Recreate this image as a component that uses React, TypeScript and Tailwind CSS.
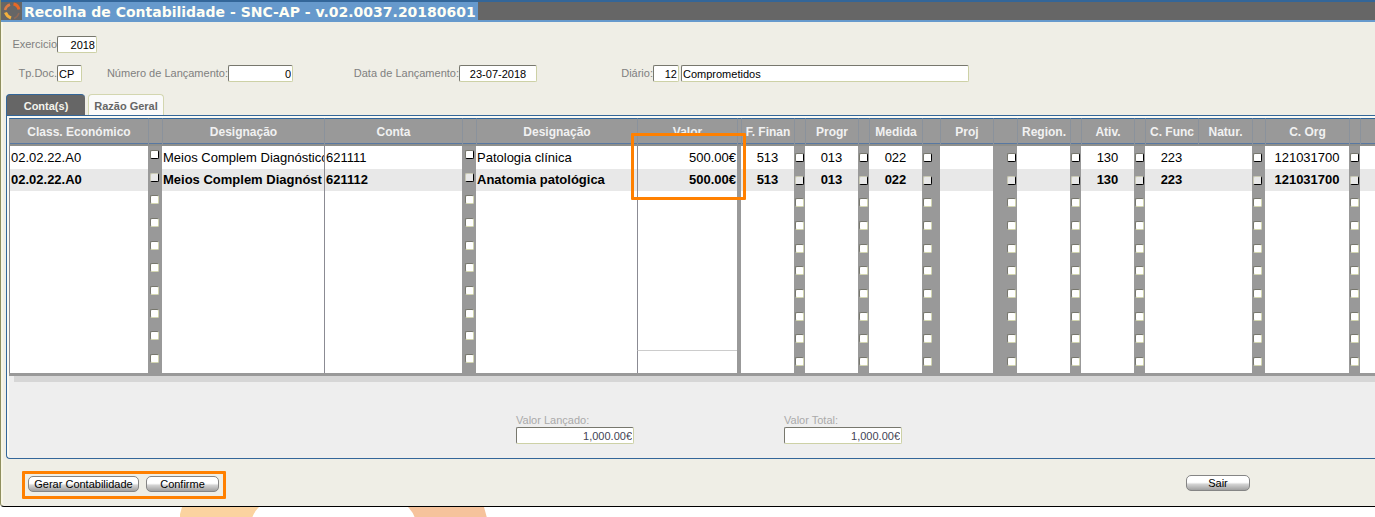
import React from "react";

type Column = {
  id: string;
  title?: string;
  width: string;
  kind: "text" | "high" | "low" | "gap";
  align?: string;
  line?: boolean;
};

const columns: Column[] = [
  { id: "classe", title: "Class. Económico", width: "w-[139px]", kind: "text", align: "text-left", line: true },
  { id: "b1", width: "w-[14px]", kind: "high", align: "pl-[2px]" },
  { id: "design1", title: "Designação", width: "w-[162px]", kind: "text", align: "text-left" },
  { id: "conta", title: "Conta", width: "w-[138px]", kind: "text", align: "text-left", line: true },
  { id: "b2", width: "w-[14px]", kind: "high", align: "pl-[3px]" },
  { id: "design2", title: "Designação", width: "w-[161px]", kind: "text", align: "text-left" },
  { id: "valor", title: "Valor", width: "w-[100px]", kind: "text", align: "text-right", line: true },
  { id: "g1", width: "w-[4px]", kind: "gap" },
  { id: "ffinan", title: "F. Finan", width: "w-[53px]", kind: "text", align: "text-center" },
  { id: "b3", width: "w-[11px]", kind: "low", align: "pl-px" },
  { id: "progr", title: "Progr", width: "w-[53px]", kind: "text", align: "text-center" },
  { id: "b4", width: "w-[11px]", kind: "low", align: "pl-px" },
  { id: "medida", title: "Medida", width: "w-[53px]", kind: "text", align: "text-center" },
  { id: "b5", width: "w-[18px]", kind: "low", align: "pl-px" },
  { id: "proj", title: "Proj", width: "w-[53px]", kind: "text", align: "text-center" },
  { id: "b6", width: "w-[24px]", kind: "low", align: "pl-[14px]" },
  { id: "region", title: "Region.", width: "w-[53px]", kind: "text", align: "text-center" },
  { id: "b7", width: "w-[11px]", kind: "low", align: "pl-px" },
  { id: "ativ", title: "Ativ.", width: "w-[53px]", kind: "text", align: "text-center" },
  { id: "b8", width: "w-[11px]", kind: "low", align: "pl-px" },
  { id: "cfunc", title: "C. Func", width: "w-[53px]", kind: "text", align: "text-center" },
  { id: "natur", title: "Natur.", width: "w-[54px]", kind: "text", align: "text-center" },
  { id: "b9", width: "w-[13px]", kind: "low", align: "pl-px" },
  { id: "corg", title: "C. Org", width: "w-[84px]", kind: "text", align: "text-center" },
  { id: "b10", width: "w-[11px]", kind: "low", align: "pl-px" },
  { id: "rest", width: "w-auto", kind: "text" },
];

const entries: Record<string, string>[] = [
  {
    classe: "02.02.22.A0",
    design1: "Meios Complem Diagnóstico",
    conta: "621111",
    design2: "Patologia clínica",
    valor: "500.00€",
    ffinan: "513",
    progr: "013",
    medida: "022",
    ativ: "130",
    cfunc: "223",
    corg: "121031700",
  },
  {
    classe: "02.02.22.A0",
    design1: "Meios Complem Diagnóst",
    conta: "621112",
    design2: "Anatomia patológica",
    valor: "500.00€",
    ffinan: "513",
    progr: "013",
    medida: "022",
    ativ: "130",
    cfunc: "223",
    corg: "121031700",
  },
];

const rowHeights = [
  "h-[23px]", "h-[22px]", "h-[23px]", "h-[23px]", "h-[22px]",
  "h-[23px]", "h-[23px]", "h-[22px]", "h-[23px]", "h-[23px]",
];

const fieldStyle =
  "h-[17px] rounded-[2px] border border-t-[#77776d] border-l-[#77776d] border-r-[#cdd1a6] border-b-[#cdd1a6] bg-white px-[3px] text-[11px] leading-[15px]";

function Field(props: {
  id: string;
  label: string;
  value: string;
  labelWidth: string;
  className: string;
}) {
  return (
    <div className="flex items-center">
      <label htmlFor={props.id} className={`${props.labelWidth} text-right text-[11px] whitespace-nowrap text-[#808080]`}>
        {props.label}
      </label>
      <input id={props.id} defaultValue={props.value} className={`${fieldStyle} ${props.className}`} />
    </div>
  );
}

function Marker({ row, name }: { row: number; name: string }) {
  const look =
    row === 0
      ? "border-t-[#77776d] border-l-[#77776d] border-r-black border-b-black bg-white"
      : row === 1
        ? "border-t-[#c9c9b4] border-l-[#c9c9b4] border-r-black border-b-black bg-[#e8e8e8]"
        : "border-t-[#77776d] border-l-[#77776d] border-r-[#d3d6b0] border-b-[#d3d6b0] bg-white";
  return (
    <input
      type="checkbox"
      aria-label={`${name} ${row + 1}`}
      className={`block size-[9px] appearance-none rounded-[2px] border ${look}`}
    />
  );
}

function Cell({ column, row }: { column: Column; row: number }) {
  const line = column.line ? "border-l border-l-[#8b8b93]" : "";
  if (column.kind === "gap") return <td className="bg-[#999] p-0" />;
  if (column.kind !== "text") {
    const top = column.kind === "high" ? "pt-[4px]" : "pt-[7px]";
    return (
      <td className={`bg-[#999] p-0 align-top ${top} ${column.align}`}>
        <Marker row={row} name={column.id} />
      </td>
    );
  }
  const fill = row === 1 ? "bg-[#e8e8e8]" : "bg-white";
  const last = row === 9 && column.id === "valor" ? "border-t border-t-[#ccc]" : "";
  return (
    <td className={`overflow-hidden px-px py-0 text-[13px] leading-[22px] whitespace-nowrap text-black ${fill} ${line} ${last} ${column.align ?? ""}`}>
      {entries[row]?.[column.id] ?? ""}
    </td>
  );
}

function Total({ id, label }: { id: string; label: string }) {
  return (
    <div className="flex w-[118px] flex-col">
      <label htmlFor={id} className="h-[14px] text-[11px] leading-[14px] text-[#aaa]">{label}</label>
      <input id={id} defaultValue="1,000.00€" className={`${fieldStyle} w-full pr-px text-right text-[#444455]`} />
    </div>
  );
}

const buttonStyle =
  "h-4 rounded-[5px] border border-[#858585] bg-linear-to-b from-white from-45% via-[#d2d2d2] via-60% to-[#a0a0a0] text-[11px] leading-[14px] text-black";

export default function App() {
  return (
    <div className="overflow-hidden bg-white font-['Liberation_Sans',Arial,sans-serif]">
      <main className="rounded-bl-[4px] border-b border-l border-b-black border-l-[#8f8f5f] bg-[#efeee6] shadow-[inset_2px_0_#f8f6e6]">
        <header className="flex h-[22px] border-t-2 border-b-2 border-t-[#336699] border-b-[#6699cc] bg-[#666]">
          <svg className="w-[21px] shrink-0" viewBox="0 0 21 18" fill="none">
            <path d="M9 2.500Q5 4 4 8" stroke="#dc7b45" strokeWidth="2.500" />
            <path d="M12.500 2Q17 3 18 7.500" stroke="#e86826" strokeWidth="3" />
            <path d="M4.500 10.500Q6 14.500 10 16" stroke="#f3b13d" strokeWidth="3" />
            <path d="M18 11Q17 14.500 13 16.500" stroke="#8f6a58" strokeWidth="1.500" />
          </svg>
          <h1 className="bg-[#6699cc] px-[2px] font-['DejaVu_Sans',Verdana,sans-serif] text-[14px] leading-[20px] font-bold whitespace-nowrap text-[#fffff4]">
            Recolha de Contabilidade - SNC-AP - v.02.0037.20180601
          </h1>
        </header>

        <form className="flex flex-col gap-3 pt-[14px] pl-[10px]">
          <Field id="exercicio" label="Exercicio" value="2018" labelWidth="w-[46px]" className="w-10 pr-px text-right" />
          <div className="flex">
            <Field id="tpdoc" label="Tp.Doc." value="CP" labelWidth="w-[46px]" className="w-[25px] pl-px" />
            <div className="ml-6">
              <Field id="numero" label="Número de Lançamento:" value="0" labelWidth="w-[122px]" className="w-[65px] pr-px text-right" />
            </div>
            <div className="ml-[58px]">
              <Field id="data" label="Data de Lançamento:" value="23-07-2018" labelWidth="w-[108px]" className="w-[78px] text-center" />
            </div>
            <div className="ml-[84px]">
              <Field id="diario" label="Diário:" value="12" labelWidth="w-8" className="w-[26px] pr-px text-right" />
            </div>
            <input aria-label="Nome do diário" defaultValue="Comprometidos" className={`${fieldStyle} ml-[2px] w-72 pl-px`} />
          </div>
        </form>

        <div role="tablist" className="mt-3 flex gap-[3px] pl-[5px]">
          <button role="tab" aria-selected="true" className="h-[21px] w-[79px] rounded-t-[4px] border-t border-l border-[#336699] bg-[#666] pt-[2px] text-[11px] font-bold text-[#f4f4ec]">
            Conta(s)
          </button>
          <button role="tab" aria-selected="false" className="h-[21px] w-[76px] rounded-t-[4px] border border-b-0 border-[#d3d6b0] bg-[#fafafa] pt-[2px] text-[11px] font-bold whitespace-nowrap text-[#666]">
            Razão Geral
          </button>
        </div>

        <section className="ml-[5px] rounded-bl-[4px] border-t border-b border-l border-[#336699] bg-[#eee] pt-[2px] pl-[2px] shadow-[inset_2px_2px_#fafaf4]">
          <table className="w-full table-fixed border-separate border-spacing-0 border-b-[3px] border-b-[#999]">
            <colgroup>
              {columns.map((c) => (
                <col key={c.id} className={c.width} />
              ))}
            </colgroup>
            <thead>
              <tr className="h-[28px] bg-[#999]">
                {columns.map((c) => (
                  <th
                    key={c.id}
                    className="relative border-t border-b-2 border-l border-t-[#336699] border-b-[#8e8f8c] border-l-[#8a929c] p-0 text-[12px] leading-[22px] font-bold whitespace-nowrap text-[#f1f1f1] shadow-[inset_0_-1px_#5878a2]"
                  >
                    {c.title}
                    {c.id === "valor" && (
                      <span className="pointer-events-none absolute top-[14px] -left-[7px] z-10 h-[67px] w-[115px] rounded-[1px] border-3 border-[#ff8000]" />
                    )}
                  </th>
                ))}
              </tr>
            </thead>
            <tbody>
              {rowHeights.map((height, row) => (
                <tr key={row} className={`${height} ${row === 1 ? "font-bold" : ""}`}>
                  {columns.map((c) => (
                    <Cell key={c.id} column={c} row={row} />
                  ))}
                </tr>
              ))}
            </tbody>
          </table>
          <div className="ml-[5px] h-[6px] bg-[#d6d6d6]" />
          <div className="flex gap-[150px] pt-[31px] pb-[14px] pl-[507px]">
            <Total id="lancado" label="Valor Lançado:" />
            <Total id="total" label="Valor Total:" />
          </div>
        </section>

        <footer className="flex items-center pt-3 pb-[7px] pl-[21px]">
          <div className="flex gap-[7px] rounded-[1px] border-3 border-[#ff8000] pt-[2px] pr-1 pb-1 pl-[3px]">
            <button className={`${buttonStyle} w-[111px] whitespace-nowrap`}>Gerar Contabilidade</button>
            <button className={`${buttonStyle} w-[73px]`}>Confirme</button>
          </div>
          <button className={`${buttonStyle} mb-1 ml-[960px] w-16`}>Sair</button>
        </footer>
      </main>
      <svg className="ml-[180px] block h-[11px] w-[310px]" viewBox="0 0 310 11">
        <path d="M2 0H79Q74 5 72 11H-1Z" fill="#fbd3a0" />
        <path d="M228 0H304L307 11H235Q233 5 228 0Z" fill="#f6c39c" />
      </svg>
    </div>
  );
}
